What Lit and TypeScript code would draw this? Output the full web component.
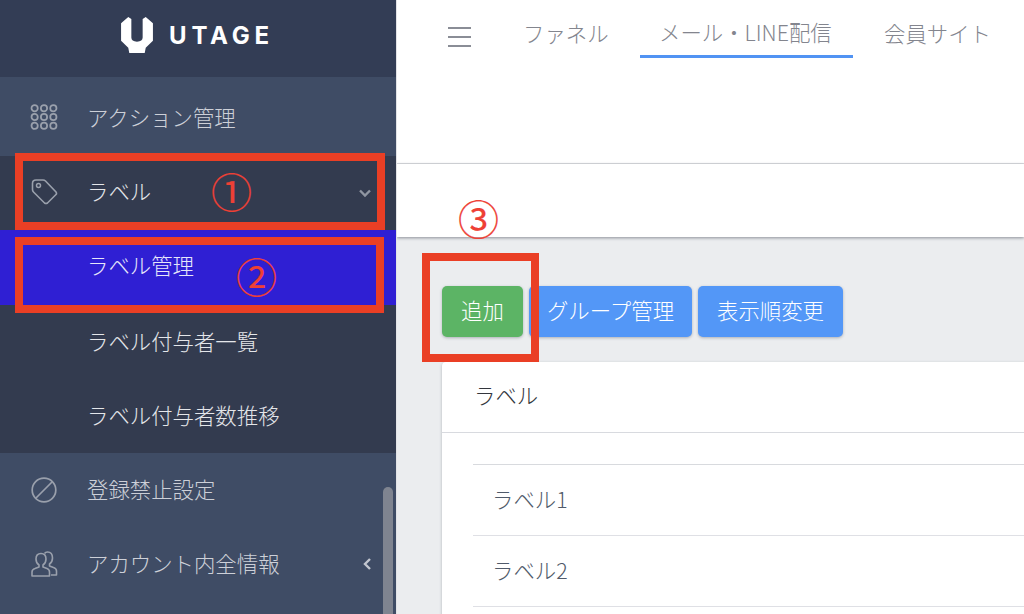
import { LitElement, html, css, svg } from "lit";
import { customElement } from "lit/decorators.js";

const icons = {
  grid: svg`${[0, 1, 2].flatMap((r) =>
    [0, 1, 2].map((c) => svg`<circle cx=${4 + c * 9} cy=${4 + r * 8.5} r="3" fill="none" stroke="currentColor" stroke-width="1.7"/>`)
  )}`,
  tag: svg`<path d="M2.5 5.5 Q2.5 2 6 2 L13 2 Q14.5 2 15.5 3 L26 14 Q27 15.5 26 16.5 L17.5 25 Q16 26 14.5 25 L3.5 14 Q2.5 13 2.5 11.5 Z" fill="none" stroke="currentColor" stroke-width="1.6"/><circle cx="8.5" cy="7.5" r="2" fill="none" stroke="currentColor" stroke-width="1.5"/>`,
  ban: svg`<circle cx="13" cy="13" r="11.8" fill="none" stroke="currentColor" stroke-width="1.7"/><path d="M5 21 L21 5" stroke="currentColor" stroke-width="1.7"/>`,
  users: svg`<path d="M1 25 L1 21 Q1 18.5 4 17.5 L8 16 L8 14 Q5 12 5 8 Q5 2.5 10 2.5 Q15 2.5 15 8 Q15 12 12 14 L12 16 L16 17.5 Q18.5 18.5 18.5 21 L18.5 25 Z" fill="none" stroke="currentColor" stroke-width="1.6" stroke-linejoin="round"/><path d="M13.5 2.5 Q14.5 1 16.5 1 Q21.5 1 21.5 7 Q21.5 11 18.5 13 L18.5 15 L22.5 16.5 Q25.5 17.5 25.5 20 L25.5 24 L20 24" fill="none" stroke="currentColor" stroke-width="1.6" stroke-linejoin="round"/>`,
};

@customElement("app-root")
export class AppRoot extends LitElement {
  static styles = css`
    :host {
      display: block;
      position: relative;
      width: 1024px;
      height: 614px;
      overflow: hidden;
      background: #ebedef;
      font-family: "Noto Sans CJK JP", "Noto Sans", sans-serif;
      font-size: 21.4px;
      font-weight: 300;
    }
    .page {
      display: flex;
      height: 614px;
    }

    /* sidebar */
    .side {
      position: relative;
      flex: 0 0 396px;
      background: #3f4c65;
      color: #cdd0d8;
      overflow: hidden;
    }
    .logo {
      height: 77px;
      background: #333d55;
      display: flex;
      align-items: center;
      justify-content: center;
      gap: 15px;
      padding: 0 2px 7px 0;
      box-sizing: border-box;
      color: #fff;
    }
    .logo span {
      font-family: Inter, sans-serif;
      font-weight: 700;
      font-size: 24px;
      letter-spacing: 4.8px;
      line-height: 1;
      margin-top: 1px;
    }
    .item {
      display: flex;
      align-items: center;
      height: 74px;
      padding-left: 30px;
      box-sizing: border-box;
      position: relative;
      white-space: nowrap;
    }
    .item svg {
      flex: 0 0 28px;
      color: #9aa0ac;
    }
    .item .txt {
      margin-left: 29px;
      line-height: 30px;
      padding-bottom: 2px;
    }
    .item.action {
      height: 79px;
    }
    .item.action .txt {
      padding-bottom: 0;
    }
    .group {
      background: #333b4f;
      color: #e4e6ea;
    }
    .group .item .txt {
      padding-bottom: 5px;
    }
    .group .item svg {
      margin-bottom: 2px;
    }
    .sub {
      display: flex;
      align-items: center;
      height: 74px;
      padding: 0 0 3px 87px;
      box-sizing: border-box;
      white-space: nowrap;
      line-height: 30px;
    }
    .sub.on {
      background: #2f1fd3;
      height: 75px;
      padding-bottom: 5px;
      color: #e6e6fa;
    }
    .caret {
      position: absolute;
      right: 24px;
      top: 50%;
      transform: translateY(-50%);
    }
    .thumb {
      position: absolute;
      left: 383px;
      top: 487px;
      width: 10px;
      height: 140px;
      border-radius: 5px;
      background: #7f8490;
    }

    /* main */
    .main {
      flex: 1;
      min-width: 0;
      border-left: 1px solid #e2e3e6;
      overflow: hidden;
    }
    .top {
      height: 163px;
      background: #fff;
      border-bottom: 1px solid #dcdde1;
      box-sizing: content-box;
      display: flex;
      align-items: flex-start;
    }
    .burger {
      width: 23px;
      margin: 27px 0 0 51px;
      display: flex;
      flex-direction: column;
      gap: 7px;
    }
    .burger i {
      display: block;
      height: 2px;
      background: #8a8d96;
    }
    .tabs {
      display: flex;
      margin-left: 33px;
      color: #83858e;
      white-space: nowrap;
    }
    .tab {
      height: 58px;
      padding: 18px 0 0;
      box-sizing: border-box;
      line-height: 30px;
    }
    .tab.one {
      width: 136px;
      padding-left: 19px;
    }
    .tab.on {
      width: 213px;
      padding: 17px 0 0 19px;
      border-bottom: 3px solid #5193f3;
    }
    .tab.last {
      margin-left: 31px;
    }
    .bar {
      height: 73px;
      background: #fff;
      box-shadow: 0 1px 3px rgba(60, 66, 80, 0.55);
    }
    .content {
      padding: 49px 0 0 45px;
    }
    .btns {
      display: flex;
      gap: 6px;
    }
    .btn {
      height: 51px;
      display: flex;
      align-items: center;
      justify-content: center;
      border-radius: 5px;
      color: #fff;
      background: #5397f7;
      box-shadow: 0 1px 3px rgba(60, 66, 80, 0.35);
      line-height: 30px;
      padding-bottom: 4px;
      box-sizing: border-box;
    }
    .btn.add {
      width: 81px;
      background: #5cb465;
    }
    .btn.group-btn {
      width: 163px;
    }
    .btn.order {
      width: 145px;
    }
    .card {
      margin-top: 25px;
      width: 700px;
      height: 300px;
      background: #fff;
      border-radius: 4px 0 0 0;
      box-shadow: 0 1px 3px rgba(60, 66, 80, 0.35);
      color: #33363d;
    }
    .card-head {
      height: 66px;
      padding: 0 0 4px 32px;
      display: flex;
      align-items: center;
      border-bottom: 1px solid #d8dadf;
      line-height: 30px;
    }
    .list {
      margin: 31px 0 0 31px;
      border-top: 1px solid #d8dade;
    }
    .row {
      height: 71px;
      display: flex;
      align-items: center;
      padding: 0 0 2px 19px;
      box-sizing: border-box;
      border-bottom: 1px solid #dfe0e5;
      color: #505a6a;
      line-height: 30px;
    }

    /* red annotations over the screenshot */
    .mark {
      position: absolute;
      border: 8px solid #ea3f25;
      box-sizing: border-box;
    }
    .mark.m1 {
      left: 15px;
      top: 153px;
      width: 370px;
      height: 77px;
    }
    .mark.m2 {
      left: 15px;
      top: 237px;
      width: 369px;
      height: 76px;
    }
    .mark.m3 {
      left: 422px;
      top: 253px;
      width: 117px;
      height: 109px;
    }
    .num {
      position: absolute;
      font-size: 41px;
      font-weight: 400;
      line-height: 46px;
      color: #ee4035;
      -webkit-text-stroke: 0.2px #ee4035;
    }
  `;

  render() {
    return html`
      <div class="page">
        <aside class="side">
          <div class="logo">
            <svg width="34" height="37" viewBox="0 0 33 36">
              <path fill="#fff" d="M8 0 L11 2 L11 20 Q11 24 16.5 24 Q22 24 22 20 L22 2 L25 0 L32 6 L32 23 L25 30 L24 35 L9 35 L8 30 L1 23 L1 6 Z"/>
            </svg>
            <span>UTAGE</span>
          </div>
          <div class="item action">
            <svg width="28" height="26" viewBox="0 0 26 25">${icons.grid}</svg>
            <span class="txt">アクション管理</span>
          </div>
          <div class="group">
            <div class="item">
              <svg width="28" height="28" viewBox="0 0 28 28">${icons.tag}</svg>
              <span class="txt">ラベル</span>
              <svg class="caret" width="14" height="9" viewBox="0 0 14 9">
                <path d="M2 2 L7 7 L12 2" fill="none" stroke="#8f95a1" stroke-width="2.4"/>
              </svg>
            </div>
            <div class="sub on">ラベル管理</div>
            <div class="sub">ラベル付与者一覧</div>
            <div class="sub">ラベル付与者数推移</div>
          </div>
          <div class="item">
            <svg width="28" height="26" viewBox="0 0 26 26">${icons.ban}</svg>
            <span class="txt">登録禁止設定</span>
          </div>
          <div class="item">
            <svg width="28" height="26" viewBox="0 0 26 26">${icons.users}</svg>
            <span class="txt">アカウント内全情報</span>
            <svg class="caret" width="9" height="14" viewBox="0 0 9 14">
              <path d="M7 2 L2 7 L7 12" fill="none" stroke="#c2c6cf" stroke-width="2.4"/>
            </svg>
          </div>
          <div class="thumb"></div>
        </aside>
        <main class="main">
          <div class="top">
            <div class="burger"><i></i><i></i><i></i></div>
            <nav class="tabs">
              <div class="tab one">ファネル</div>
              <div class="tab on">メール・LINE配信</div>
              <div class="tab last">会員サイト</div>
            </nav>
          </div>
          <div class="bar"></div>
          <div class="content">
            <div class="btns">
              <div class="btn add">追加</div>
              <div class="btn group-btn">グループ管理</div>
              <div class="btn order">表示順変更</div>
            </div>
            <section class="card">
              <div class="card-head">ラベル</div>
              <div class="list">
                <div class="row">ラベル1</div>
                <div class="row">ラベル2</div>
              </div>
            </section>
          </div>
        </main>
      </div>
      <div class="mark m1"></div>
      <div class="mark m2"></div>
      <div class="mark m3"></div>
      <span class="num" style="left:211px;top:167px">①</span>
      <span class="num" style="left:236px;top:252px">②</span>
      <span class="num" style="left:458px;top:194px">③</span>
    `;
  }
}
